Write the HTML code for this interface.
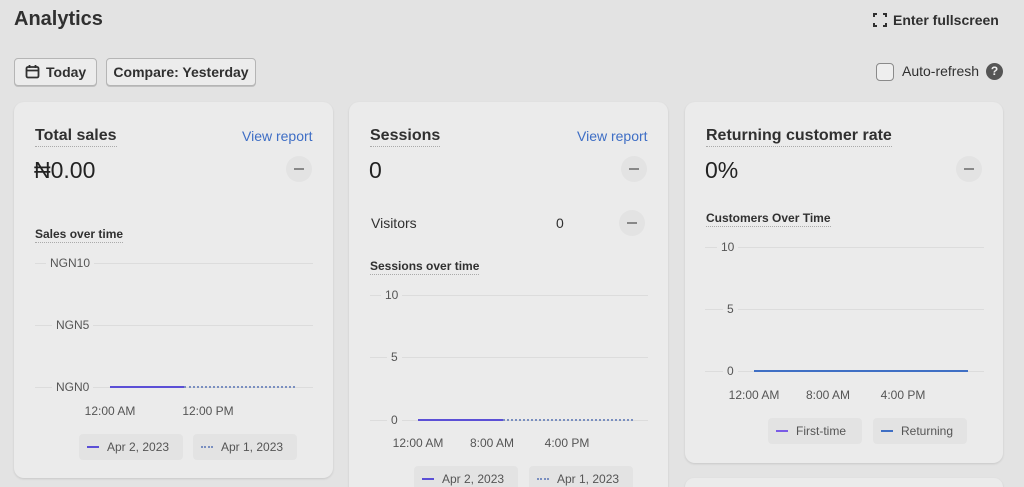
<!DOCTYPE html>
<html style="width:1024px;height:487px;overflow:hidden"><head><meta charset="utf-8"><style>
*{box-sizing:border-box;margin:0;padding:0}
body{width:1024px;height:487px;overflow:hidden;background:#e3e3e3;font-family:"Liberation Sans",sans-serif;color:#303030;position:relative}
.a{position:absolute;white-space:nowrap}
.card{position:absolute;background:#ebebeb;border-radius:10px;box-shadow:0 1px 2px rgba(0,0,0,.12)}
.btn{position:absolute;border:1px solid #b5b5b5;border-radius:4px;background:#ececec;font-size:14px;font-weight:bold;color:#303030;height:28px;line-height:26px;box-shadow:0 1px 0 rgba(0,0,0,.15)}
.t{font-size:16px;font-weight:bold;color:#303030;border-bottom:1.5px dotted #aaa;padding-bottom:1px}
.v{font-size:23px;color:#222}
.m{position:absolute;width:26px;height:26px;border-radius:50%;background:#e3e3e3}
.m:after{content:"";position:absolute;left:8px;top:12px;width:10px;height:1.5px;background:#888}
.st{font-size:12px;font-weight:bold;color:#303030;border-bottom:1.5px dotted #aaa;padding-bottom:1px}
.g{position:absolute;height:1px;background:#dcdcdc}
.yl{font-size:12px;color:#555;text-align:right;background:#ebebeb;padding:0 4px}
.xl{font-size:12px;color:#555;transform:translateX(-50%)}
.lg{position:absolute;background:#e3e3e3;border-radius:4px;height:26px;font-size:12px;color:#555;line-height:26px;padding-left:28px}
.lg i{position:absolute;left:8px;top:12px;width:12px;height:2px}
.lg i.d{background:none;border-top:2px dotted #7a8fc0;height:0}
.pl{position:absolute;height:2px;background:#5b4fd6}
.dl{position:absolute;height:0;border-top:2px dotted #7a8fc0}
.link{font-size:14px;color:#3e6ec5}
</style></head><body>
<div class="a" style="left:14px;top:8px;font-size:20px;font-weight:bold;color:#303030">Analytics</div>
<div class="a" style="left:873px;top:12px;font-size:14px;font-weight:bold">
<svg width="14" height="14" viewBox="0 0 14 14" style="vertical-align:-2px;margin-right:6px" fill="none" stroke="#303030" stroke-width="2"><path d="M1 4V1h3M10 1h3v3M13 10v3h-3M4 13H1v-3"/></svg>Enter fullscreen</div>
<div class="btn" style="left:14px;top:58px;width:83px;padding-left:31px">Today</div>
<svg class="a" style="left:25px;top:64px" width="15" height="15" viewBox="0 0 15 15" fill="none" stroke="#303030" stroke-width="1.8"><rect x="1.5" y="3" width="12" height="10.5" rx="1.5"/><path d="M1.5 6.5h12M4.5 1v3M10.5 1v3"/></svg>
<div class="btn" style="left:106px;top:58px;width:150px;text-align:center">Compare: Yesterday</div>
<div class="a" style="left:876px;top:63px;width:18px;height:18px;border:1.5px solid #8a8a8a;border-radius:4px;background:#eee"></div>
<div class="a" style="left:902px;top:63px;font-size:14px;color:#303030">Auto-refresh</div>
<div class="a" style="left:986px;top:63px;width:17px;height:17px;border-radius:50%;background:#555;color:#eee;font-size:12px;font-weight:bold;text-align:center;line-height:17px">?</div>

<div class="card" style="left:14px;top:102px;width:319px;height:376px"></div>
<div class="a t" style="left:35px;top:127px">Total sales</div>
<div class="a link" style="left:242px;top:128px">View report</div>
<div class="a v" style="left:34px;top:157px">₦0.00</div>
<div class="m" style="left:286px;top:156px"></div>
<div class="a st" style="left:35px;top:227px">Sales over time</div>
<div class="g" style="left:35px;top:263px;width:278px"></div>
<div class="g" style="left:35px;top:325px;width:278px"></div>
<div class="g" style="left:35px;top:387px;width:278px"></div>
<div class="a yl" style="left:46px;top:256px">NGN10</div>
<div class="a yl" style="left:52px;top:318px">NGN5</div>
<div class="a yl" style="left:52px;top:380px">NGN0</div>
<div class="pl" style="left:110px;top:386px;width:74px"></div>
<div class="dl" style="left:184px;top:386px;width:111px"></div>
<div class="a xl" style="left:110px;top:404px">12:00 AM</div>
<div class="a xl" style="left:208px;top:404px">12:00 PM</div>
<div class="lg" style="left:79px;top:434px;width:104px"><i style="background:#5b4fd6"></i>Apr 2, 2023</div>
<div class="lg" style="left:193px;top:434px;width:104px"><i class="d"></i>Apr 1, 2023</div>

<div class="card" style="left:349px;top:102px;width:319px;height:400px"></div>
<div class="a t" style="left:370px;top:127px">Sessions</div>
<div class="a link" style="left:577px;top:128px">View report</div>
<div class="a v" style="left:369px;top:157px">0</div>
<div class="m" style="left:621px;top:156px"></div>
<div class="a" style="left:371px;top:215px;font-size:14px">Visitors</div>
<div class="a" style="left:556px;top:215px;font-size:14px">0</div>
<div class="m" style="left:619px;top:210px"></div>
<div class="a st" style="left:370px;top:259px">Sessions over time</div>
<div class="g" style="left:370px;top:295px;width:278px"></div>
<div class="g" style="left:370px;top:357px;width:278px"></div>
<div class="g" style="left:370px;top:420px;width:278px"></div>
<div class="a yl" style="left:381px;top:288px">10</div>
<div class="a yl" style="left:387px;top:350px">5</div>
<div class="a yl" style="left:387px;top:413px">0</div>
<div class="pl" style="left:418px;top:419px;width:85px"></div>
<div class="dl" style="left:503px;top:419px;width:130px"></div>
<div class="a xl" style="left:418px;top:436px">12:00 AM</div>
<div class="a xl" style="left:492px;top:436px">8:00 AM</div>
<div class="a xl" style="left:567px;top:436px">4:00 PM</div>
<div class="lg" style="left:414px;top:466px;width:104px"><i style="background:#5b4fd6"></i>Apr 2, 2023</div>
<div class="lg" style="left:529px;top:466px;width:104px"><i class="d"></i>Apr 1, 2023</div>

<div class="card" style="left:685px;top:102px;width:318px;height:361px"></div>
<div class="card" style="left:685px;top:478px;width:318px;height:9px;border-radius:10px 10px 0 0"></div>
<div class="a t" style="left:706px;top:127px">Returning customer rate</div>
<div class="a v" style="left:705px;top:157px">0%</div>
<div class="m" style="left:956px;top:156px"></div>
<div class="a st" style="left:706px;top:211px">Customers Over Time</div>
<div class="g" style="left:705px;top:247px;width:279px"></div>
<div class="g" style="left:705px;top:309px;width:279px"></div>
<div class="g" style="left:705px;top:371px;width:279px"></div>
<div class="a yl" style="left:717px;top:240px">10</div>
<div class="a yl" style="left:723px;top:302px">5</div>
<div class="a yl" style="left:723px;top:364px">0</div>
<div class="pl" style="left:754px;top:370px;width:214px;background:#3f6fc4"></div>
<div class="a xl" style="left:754px;top:388px">12:00 AM</div>
<div class="a xl" style="left:828px;top:388px">8:00 AM</div>
<div class="a xl" style="left:903px;top:388px">4:00 PM</div>
<div class="lg" style="left:768px;top:418px;width:94px"><i style="background:#7a5ce6"></i>First-time</div>
<div class="lg" style="left:873px;top:418px;width:94px"><i style="background:#3f6fc4"></i>Returning</div>
</body></html>
